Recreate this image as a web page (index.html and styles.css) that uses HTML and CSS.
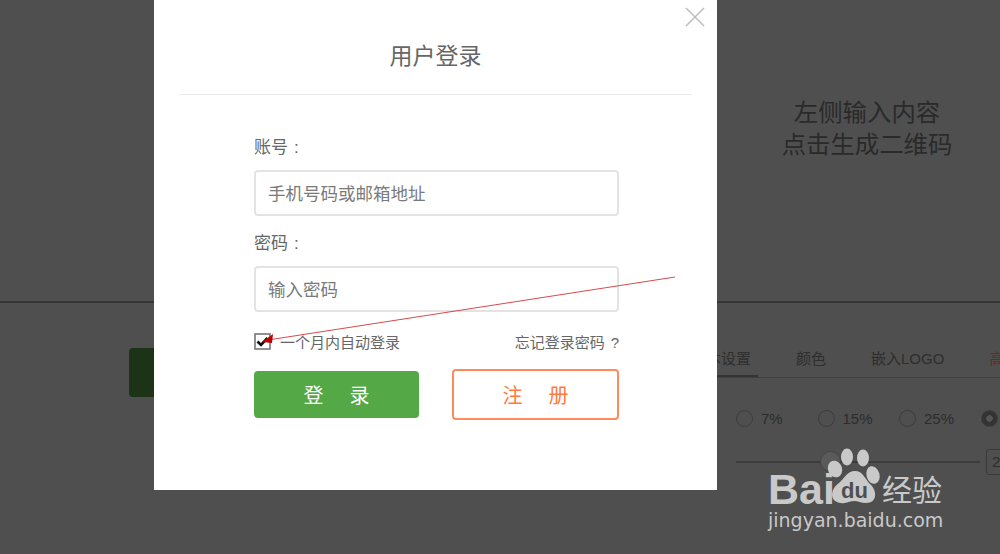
FILE: index.html
```html
<!DOCTYPE html>
<html lang="zh-CN">
<head>
  <meta charset="UTF-8" />
  <title>用户登录</title>
  <link rel="stylesheet" href="styles.css">
</head>
<body>
  <div class="page">
    <div class="top">
      <p class="hint">左侧输入内容<br>点击生成二维码</p>
    </div>
    <div class="bottom">
      <div class="make-btn"></div>
      <div class="panel">
        <div class="tabs">
          <span class="tab tab-on">基本设置</span>
          <span class="tab">颜色</span>
          <span class="tab">嵌入LOGO</span>
          <span class="tab tab-red">高</span>
        </div>
        <div class="radios">
          <span class="radio"><i></i>7%</span>
          <span class="radio"><i></i>15%</span>
          <span class="radio"><i></i>25%</span>
          <span class="radio radio-on"><i></i></span>
        </div>
        <div class="slider-row">
          <div class="slider"><b></b></div>
          <div class="num">2</div>
        </div>
      </div>
    </div>
  </div>

  <div class="modal">
    <svg class="close" width="20" height="20" viewBox="0 0 20 20"><path d="M1 1L19 19M19 1L1 19" stroke="#bdbdbd" stroke-width="1.5" fill="none"/></svg>
    <h2 class="title">用户登录</h2>
    <form class="form">
      <label class="lbl">账号<span class="punct">:</span></label>
      <div class="field">手机号码或邮箱地址</div>
      <label class="lbl">密码<span class="punct">:</span></label>
      <div class="field">输入密码</div>
      <div class="opts">
        <span class="remember">
          <svg class="check" width="17" height="17" viewBox="0 0 17 17"><rect x="1" y="1" width="15" height="15" fill="#fff" stroke="#767676" stroke-width="1.6"/><path d="M3.5 8.5L7 12L13.5 5" stroke="#111" stroke-width="2.6" fill="none"/></svg>
          一个月内自动登录
        </span>
        <span>忘记登录密码<span class="punct">?</span></span>
      </div>
      <div class="btns">
        <div class="btn btn-login">登<em></em>录</div>
        <div class="btn btn-reg">注<em></em>册</div>
      </div>
    </form>
  </div>

  <svg class="arrow" width="1000" height="554" viewBox="0 0 1000 554">
    <path d="M675 277L268 340" stroke="#d84a4a" stroke-width="1" fill="none"/>
    <path d="M262 342L273 334L272 343Z" fill="#c00000"/>
  </svg>

  <div class="mark">
    <svg class="paw" width="64" height="72" viewBox="0 0 64 72">
      <ellipse cx="27" cy="9" rx="6" ry="8.5"/>
      <ellipse cx="43" cy="10" rx="6" ry="8.5"/>
      <ellipse cx="15" cy="21" rx="7" ry="8.5" transform="rotate(-20 15 21)"/>
      <ellipse cx="53" cy="27" rx="6.5" ry="9" transform="rotate(-15 53 27)"/>
      <path d="M35 23C43 23 45 31 50 36C57 42 58 55 46 55C41 55 38 53 34 53C30 53 26 56 21 55C9 54 10 41 19 35C24 31 27 23 35 23Z"/>
    </svg>
    <span class="bai">Bai</span>
    <span class="du">du</span>
    <span class="jy">经验</span>
    <span class="url">jingyan.baidu.com</span>
  </div>
</body>
</html>
```

FILE: styles.css
```css
html, body {
  margin: 0;
  height: 100%;
  overflow: hidden;
}
body {
  background-color: #4f4f4f;
  font-family: "Liberation Sans", "Noto Sans CJK SC", sans-serif;
  color: #262626;
  position: relative;
}
.page {
  height: 554px;
  display: flex;
  flex-direction: column;
}
.top {
  height: 301px;
  border-bottom: 2px solid #363636;
  display: flex;
  justify-content: flex-end;
  align-items: flex-start;
  flex-shrink: 0;
}
.hint {
  margin: 97px 47px 0 0;
  font-size: 24.4px;
  line-height: 32px;
  text-align: center;
  color: #2a2a2a;
  width: 172px;
  white-space: nowrap;
}
.bottom {
  display: flex;
  align-items: flex-start;
  padding-top: 45px;
}
.make-btn {
  width: 120px;
  height: 49px;
  margin-left: 129px;
  background-color: #1c3318;
  border-radius: 4px;
  flex-shrink: 0;
}
.panel {
  margin-left: 420px;
  width: 420px;
  flex-shrink: 0;
}
.tabs {
  display: flex;
  align-items: center;
  height: 19px;
  padding-bottom: 10px;
  border-bottom: 1px solid #404040;
  font-size: 15px;
  color: #2e2e2e;
}
.tab { margin-right: 45px; white-space: nowrap; }
.tab-on { position: relative; margin-left: 22px; }
.tab-on::after {
  content: "";
  position: absolute;
  left: -22px;
  right: -7px;
  bottom: -9px;
  height: 2px;
  background-color: #333;
}
.tab-red { color: #6b2c10; }
.radios {
  display: flex;
  margin: 30px 0 0 67px;
  font-size: 15px;
  color: #2c2c2c;
  height: 20px;
  align-items: center;
}
.radio {
  width: 81.5px;
  flex-shrink: 0;
  display: flex;
  align-items: center;
  gap: 8px;
}
.radio i {
  width: 15px;
  height: 15px;
  border: 1px solid #3c3c3c;
  border-radius: 50%;
  flex-shrink: 0;
}
.radio-on i {
  background: radial-gradient(circle, #555 0 3px, #333 3.5px);
}
.slider-row {
  display: flex;
  align-items: center;
  margin: 21px 0 0 67px;
  gap: 6px;
}
.slider {
  width: 244px;
  height: 2px;
  background-color: #3c3c3c;
  position: relative;
  flex-shrink: 0;
}
.slider b {
  position: absolute;
  left: 84px;
  top: -10px;
  width: 21px;
  height: 21px;
  border-radius: 50%;
  border: 1px solid #454545;
  box-sizing: border-box;
  background-color: #5a5a5a;
}
.num {
  width: 40px;
  height: 24px;
  flex-shrink: 0;
  border: 1px solid #3a3a3a;
  border-radius: 3px;
  font-size: 15px;
  line-height: 24px;
  padding-left: 5px;
  color: #2c2c2c;
}

.modal {
  position: absolute;
  left: 154px;
  top: 0;
  width: 563px;
  height: 490px;
  background-color: #fff;
  box-sizing: border-box;
  padding: 0 25px;
}
.close {
  position: absolute;
  right: 12px;
  top: 7px;
}
.title {
  margin: 0;
  height: 94px;
  border-bottom: 1px solid #ececec;
  font-size: 23px;
  font-weight: normal;
  line-height: 113px;
  text-align: center;
  color: #666;
}
.form {
  width: 365px;
  margin: 0 0 0 75px;
  padding-top: 41px;
  color: #666;
}
.lbl {
  display: block;
  font-size: 17px;
  line-height: 24px;
  height: 24px;
  margin-bottom: 10px;
}
.punct { margin-left: 6px; }
.field {
  height: 46px;
  box-sizing: border-box;
  border: 2px solid #e3e3e3;
  border-radius: 4px;
  font-size: 17.5px;
  line-height: 44px;
  padding-left: 12px;
  color: #7a7a7a;
  margin-bottom: 16px;
}
.opts {
  display: flex;
  justify-content: space-between;
  align-items: center;
  font-size: 15px;
  height: 24px;
  margin-top: 17px;
}
.remember {
  display: flex;
  align-items: center;
  gap: 9px;
  font-size: 15px;
}
.btns {
  display: flex;
  justify-content: space-between;
  align-items: center;
  margin-top: 16px;
}
.btn {
  display: flex;
  justify-content: center;
  align-items: center;
  font-size: 20px;
  border-radius: 4px;
  box-sizing: border-box;
}
.btn em { width: 26px; }
.btn-login {
  width: 165px;
  height: 47px;
  background-color: #54a845;
  color: #fff;
}
.btn-reg {
  width: 167px;
  height: 51px;
  border: 2px solid #ff8a5c;
  color: #ff7a3d;
}

.arrow {
  position: absolute;
  left: 0;
  top: 0;
  pointer-events: none;
}
.mark {
  position: absolute;
  left: 768px;
  top: 446px;
  width: 180px;
  height: 90px;
  color: #c9c9c9;
}
.paw {
  position: absolute;
  left: 52px;
  top: 2px;
  fill: #c9c9c9;
}
.bai {
  position: absolute;
  left: 0;
  top: 19px;
  font-size: 43px;
  line-height: 48px;
  font-weight: bold;
}
.du {
  position: absolute;
  left: 73px;
  top: 32px;
  font-size: 22px;
  line-height: 26px;
  color: #4f4f4f;
  font-weight: bold;
}
.jy {
  position: absolute;
  left: 114px;
  top: 27px;
  font-size: 30px;
  line-height: 36px;
  white-space: nowrap;
}
.url {
  position: absolute;
  left: 0;
  top: 62px;
  font-family: "DejaVu Sans", sans-serif;
  font-size: 19px;
  line-height: 24px;
  white-space: nowrap;
}
```
